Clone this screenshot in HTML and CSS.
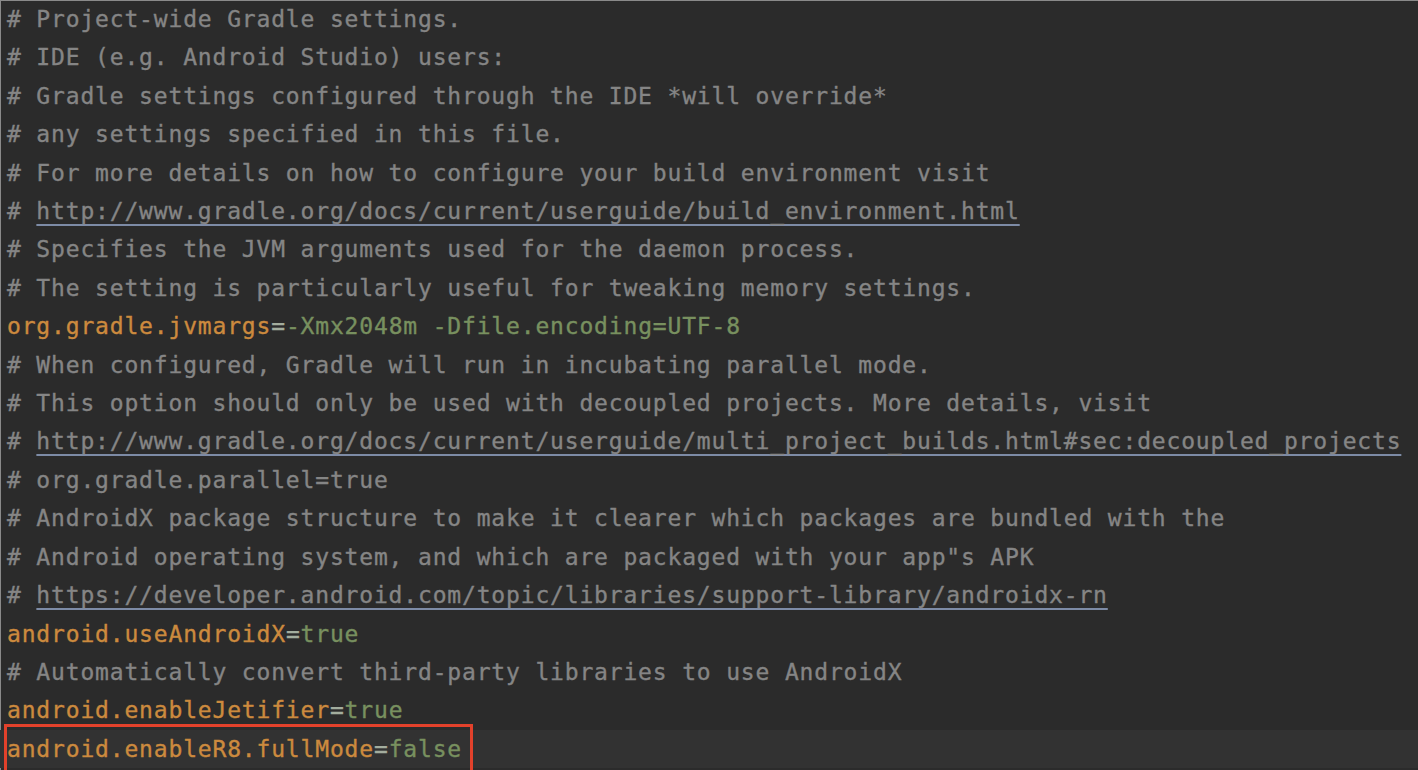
FILE: index.html
```html
<!DOCTYPE html>
<html lang="en">
<head>
<meta charset="utf-8">
<title>gradle.properties</title>
<link rel="stylesheet" href="styles.css">
</head>
<body>
<div class="editor">
  <div class="line"><span class="c"># Project-wide Gradle settings.</span></div>
  <div class="line"><span class="c"># IDE (e.g. Android Studio) users:</span></div>
  <div class="line"><span class="c"># Gradle settings configured through the IDE *will override*</span></div>
  <div class="line"><span class="c"># any settings specified in this file.</span></div>
  <div class="line"><span class="c"># For more details on how to configure your build environment visit</span></div>
  <div class="line"><span class="c"># <span class="link">http://www.gradle.org/docs/current/userguide/build_environment.html</span></span></div>
  <div class="line"><span class="c"># Specifies the JVM arguments used for the daemon process.</span></div>
  <div class="line"><span class="c"># The setting is particularly useful for tweaking memory settings.</span></div>
  <div class="line"><span class="k">org.gradle.jvmargs</span><span class="eq">=</span><span class="v">-Xmx2048m -Dfile.encoding=UTF-8</span></div>
  <div class="line"><span class="c"># When configured, Gradle will run in incubating parallel mode.</span></div>
  <div class="line"><span class="c"># This option should only be used with decoupled projects. More details, visit</span></div>
  <div class="line"><span class="c"># <span class="link">http://www.gradle.org/docs/current/userguide/multi_project_builds.html#sec:decoupled_projects</span></span></div>
  <div class="line"><span class="c"># org.gradle.parallel=true</span></div>
  <div class="line"><span class="c"># AndroidX package structure to make it clearer which packages are bundled with the</span></div>
  <div class="line"><span class="c"># Android operating system, and which are packaged with your app"s APK</span></div>
  <div class="line"><span class="c"># <span class="link">https://developer.android.com/topic/libraries/support-library/androidx-rn</span></span></div>
  <div class="line"><span class="k">android.useAndroidX</span><span class="eq">=</span><span class="v">true</span></div>
  <div class="line"><span class="c"># Automatically convert third-party libraries to use AndroidX</span></div>
  <div class="line"><span class="k">android.enableJetifier</span><span class="eq">=</span><span class="v">true</span></div>
  <div class="line current marked"><span class="k">android.enableR8.fullMode</span><span class="eq">=</span><span class="v">false</span></div>
</div>
</body>
</html>
```
FILE: styles.css
```css
html, body {
  margin: 0;
  padding: 0;
  background: #2b2b2b;
  overflow: hidden;
}

body {
  width: 1418px;
  height: 770px;
  box-shadow: inset 1px 1px 0 #8a8a8a;
}

.editor {
  display: flex;
  flex-direction: column;
  font-family: "DejaVu Sans Mono", "Liberation Mono", monospace;
  font-size: 23px;
  letter-spacing: 0.83px;
  white-space: pre;
  -webkit-text-stroke: 0.35px currentColor;
}

.line {
  height: 38.42px;
  line-height: 38.42px;
  padding-left: 7px;
  position: relative;
}

.current {
  background: #323232;
}

.marked::after {
  content: "";
  position: absolute;
  left: 4px;
  top: -6px;
  width: 469px;
  height: 60px;
  border: 3px solid #e2412b;
  box-sizing: border-box;
}

.c {
  color: #858585;
}

.link {
  text-decoration: underline;
  text-decoration-color: #7d8ba6;
  text-underline-offset: 5px;
  text-decoration-thickness: 2px;
}

.k {
  color: #cc8a3e;
}

.eq {
  color: #a3ad9e;
}

.v {
  color: #78905f;
}
```
